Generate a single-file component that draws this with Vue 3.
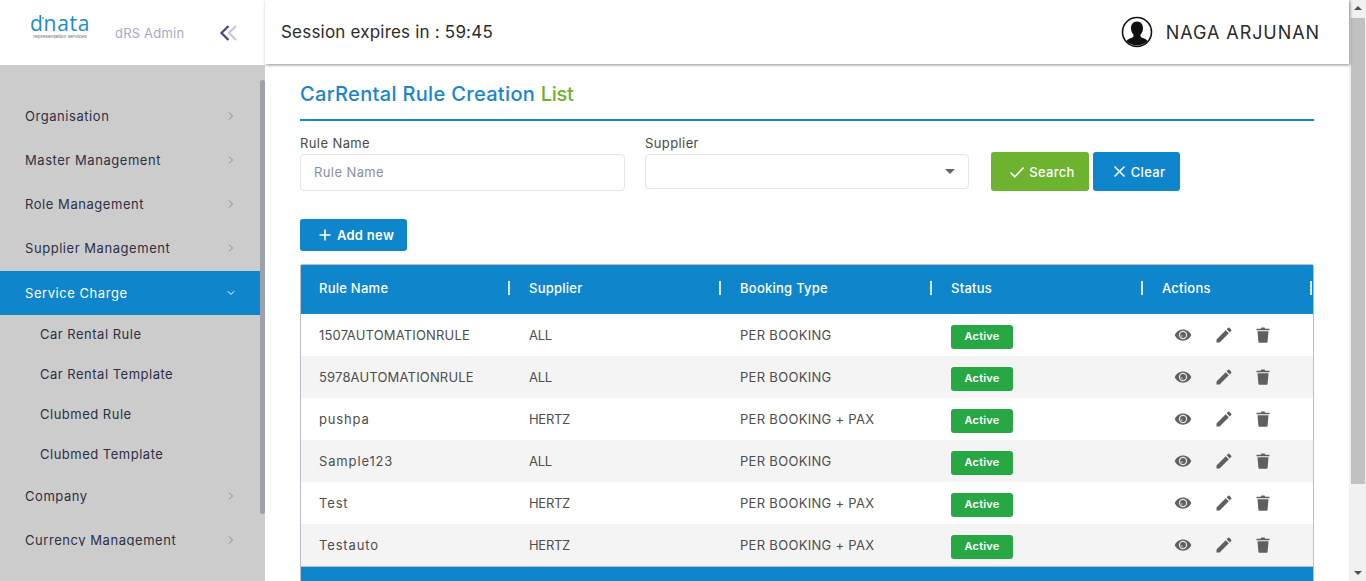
<script setup>
const menuTop = ['Organisation', 'Master Management', 'Role Management', 'Supplier Management']
const subItems = ['Car Rental Rule', 'Car Rental Template', 'Clubmed Rule', 'Clubmed Template']
const menuBottom = ['Company', 'Currency Management']
const rows = [
  ['1507AUTOMATIONRULE', 'ALL', 'PER BOOKING'],
  ['5978AUTOMATIONRULE', 'ALL', 'PER BOOKING'],
  ['pushpa', 'HERTZ', 'PER BOOKING + PAX'],
  ['Sample123', 'ALL', 'PER BOOKING'],
  ['Test', 'HERTZ', 'PER BOOKING + PAX'],
  ['Testauto', 'HERTZ', 'PER BOOKING + PAX'],
]
const heads = ['Rule Name', 'Supplier', 'Booking Type', 'Status', 'Actions']
const isMixed = (s) => /[a-z]/.test(s)
</script>

<template>
  <div class="page">
    <aside class="side">
      <div class="brand">
        <div class="logo">
          <div class="logo-word">dnata<i class="logo-dot"></i></div>
          <div class="logo-sub">representation services</div>
        </div>
        <span class="brand-name">dRS Admin</span>
        <svg class="collapse" width="20" height="18" viewBox="0 0 20 18" fill="none" stroke-width="2.2">
          <path d="M9.5 2 2.5 9l7 7" stroke="#45497a" />
          <path d="M17 2 10 9l7 7" stroke="#c6c7d6" />
        </svg>
      </div>
      <div class="menu">
        <nav class="menu-list">
          <a v-for="m in menuTop" :key="m" class="item">
            <span>{{ m }}</span>
            <svg class="chev" width="8" height="10" viewBox="0 0 8 10" fill="none"><path d="M2 1.5 5.5 5 2 8.5" stroke="#85889a" /></svg>
          </a>
          <a class="item active">
            <span>Service Charge</span>
            <svg class="chev" width="8" height="10" viewBox="0 0 8 10" fill="none"><path d="M.8 3.200 4 6.400l3.200-3.200" stroke="#fff" /></svg>
          </a>
          <a v-for="s in subItems" :key="s" class="sub">{{ s }}</a>
          <a v-for="m in menuBottom" :key="m" class="item">
            <span>{{ m }}</span>
            <svg class="chev" width="8" height="10" viewBox="0 0 8 10" fill="none"><path d="M2 1.5 5.5 5 2 8.5" stroke="#85889a" /></svg>
          </a>
        </nav>
        <div class="side-track"><div class="side-thumb"></div></div>
      </div>
    </aside>

    <div class="main">
      <header class="top">
        <div class="session">Session expires in : 59:45</div>
        <div class="user">
          <svg width="32" height="32" viewBox="0 0 32 32">
            <circle cx="16" cy="16" r="14.5" fill="#fff" stroke="#111" stroke-width="1.6" />
            <path d="M16 5.5c-3.900 0-6 2.900-6 6.600 0 2.600.9 5 2.500 6.600.3 1.600-.3 2.500-1.700 3.100-2 .8-4.100 1.500-5.400 3.100a14.700 14.700 0 0 0 21.200 0c-1.300-1.600-3.400-2.300-5.400-3.100-1.400-.6-2-1.500-1.700-3.100 1.600-1.600 2.500-4 2.500-6.600 0-3.700-2.100-6.600-6-6.600z" fill="#111" />
          </svg>
          <span>NAGA ARJUNAN</span>
        </div>
      </header>

      <main class="content">
        <h1 class="title">CarRental Rule Creation <span>List</span></h1>
        <form class="filters" @submit.prevent>
          <label class="field">
            <span class="lbl">Rule Name</span>
            <input class="inp" placeholder="Rule Name" />
          </label>
          <label class="field field-sel">
            <span class="lbl">Supplier</span>
            <span class="sel"><i class="caret"></i></span>
          </label>
          <div class="btns">
            <button class="btn green">
              <svg width="16" height="14" viewBox="0 0 16 14" fill="none"><path d="M1.500 7.500 5.800 11.800 14.500 2.500" stroke="#fff" stroke-width="1.700" /></svg>
              Search
            </button>
            <button class="btn blue">
              <svg width="13" height="13" viewBox="0 0 13 13" fill="none"><path d="M1.500 1.500l10 10M11.500 1.500l-10 10" stroke="#fff" stroke-width="1.500" /></svg>
              Clear
            </button>
          </div>
        </form>
        <button class="add">
          <svg width="12" height="12" viewBox="0 0 12 12" fill="none"><path d="M6 .5v11M.5 6h11" stroke="#fff" stroke-width="1.600" /></svg>
          Add new
        </button>

        <div class="table">
          <div class="row head">
            <div v-for="h in heads" :key="h" class="cell">{{ h }}</div>
          </div>
          <div v-for="r in rows" :key="r[0]" class="row body">
            <div class="cell" :class="isMixed(r[0]) ? 'mixed' : 'caps'">{{ r[0] }}</div>
            <div class="cell sup">{{ r[1] }}</div>
            <div class="cell bt">{{ r[2] }}</div>
            <div class="cell"><span class="badge">Active</span></div>
            <div class="cell icons">
              <svg width="18" height="18" viewBox="0 0 24 24">
                <path d="M12 4.500C7 4.500 2.700 7.600 1 12c1.700 4.400 6 7.500 11 7.500s9.300-3.100 11-7.500c-1.700-4.400-6-7.500-11-7.500z" fill="#5f5f5f" />
                <circle cx="12" cy="12" r="5.600" fill="#e8e8e8" />
                <circle cx="12" cy="12" r="3.900" fill="#5f5f5f" />
                <circle cx="10.300" cy="13.400" r="1.500" fill="#a8a8a8" />
              </svg>
              <svg width="20" height="20" viewBox="0 0 24 24" fill="#5f5f5f"><path d="M3 17.250V21h3.750L17.810 9.940l-3.750-3.750L3 17.250zM20.710 7.040a1 1 0 0 0 0-1.410l-2.340-2.340a1 1 0 0 0-1.410 0l-1.830 1.830 3.750 3.750 1.830-1.830z" /></svg>
              <svg width="14" height="16" viewBox="0 0 14 16" fill="#5f5f5f"><path d="M.5 1.800h4.200L5.400.6h3.200l.7 1.200h4.200v1.500H.5zM1.500 4.300h11l-.9 10.500a1 1 0 0 1-1 .9H3.400a1 1 0 0 1-1-.9z" /></svg>
            </div>
          </div>
          <div class="foot"></div>
        </div>
      </main>
    </div>

    <div class="scroll">
      <i class="arrow up"></i>
      <div class="scroll-track"><div class="scroll-thumb"></div></div>
      <i class="arrow down"></i>
    </div>
  </div>
</template>

<style>
html, body { margin: 0; overflow: hidden; }
</style>

<style scoped>
.page {
  display: flex;
  height: 581px;
  overflow: hidden;
  background: #fff;
  font-family: Inter, "Noto Sans", "Liberation Sans", sans-serif;
  color: #444;
}
.side { width: 265px; flex: none; display: flex; flex-direction: column; }
.brand { height: 65px; flex: none; background: #fff; display: flex; align-items: center; }
.logo { width: 60px; margin-left: 30px; margin-top: -11px; text-align: center; line-height: 1; }
.logo-word { position: relative; color: #1a8cc9; font-family: "Open Sans", sans-serif; font-size: 21px; line-height: 16px; letter-spacing: .7px; }
.logo-dot { position: absolute; left: 12px; top: 2px; width: 2px; height: 2px; border-radius: 50%; background: #7dbb2e; }
.logo-sub { color: #6f7580; font-family: "Liberation Sans", sans-serif; font-size: 5.200px; line-height: 7px; white-space: nowrap; margin-top: 2px; }
.brand-name { margin-left: 25px; font-size: 13px; color: #a6a9c4; letter-spacing: .2px; }
.collapse { margin-left: 35px; }
.menu { flex: 1; background: #ccc; display: flex; min-height: 0; align-items: flex-start; }
.menu-list { flex: 1; height: 452px; padding-top: 29px; display: flex; flex-direction: column; overflow: hidden; }
.item { height: 44px; flex: none; display: flex; align-items: center; justify-content: space-between; padding: 0 25px; font-size: 13px; color: #2f2f45; letter-spacing: .55px; }
.item.active { background: #0f85cb; color: #fff; margin-top: 1px; margin-bottom: -1px; }
.sub { height: 40px; flex: none; display: flex; align-items: center; padding-left: 40px; font-size: 13px; color: #2f2f45; letter-spacing: .5px; }
.side-track { width: 5px; flex: none; padding-top: 15px; }
.side-thumb { height: 434px; background: #9da1ae; border-radius: 3px; }

.main { flex: 1; min-width: 0; display: flex; flex-direction: column; }
.top {
  height: 64px; flex: none; display: flex; align-items: center; justify-content: space-between;
  padding: 0 29px 0 16px; background: #fff; box-shadow: 1px 1px 3px rgba(0, 0, 0, .45); position: relative; z-index: 1;
}
.session { font-size: 17px; color: #2b2b2b; letter-spacing: .2px; }
.user { display: flex; align-items: center; gap: 13px; font-size: 18px; color: #2b2b2b; letter-spacing: .92px; }
.content { flex: 1; min-height: 0; padding: 0 35px; }
.title { margin: 0; height: 57px; box-sizing: border-box; padding-top: 16px; font-size: 20px; line-height: 28px; font-weight: 500; color: #1a85c9; border-bottom: 2px solid #0f85cb; letter-spacing: .33px; }
.title span { color: #6db32f; letter-spacing: -.3px; }
.filters { display: flex; margin-top: 13px; height: 57px; }
.field { display: flex; flex-direction: column; width: 325px; }
.field-sel { width: 324px; margin-left: 20px; }
.lbl { font-size: 13px; line-height: 18px; margin-bottom: 2px; color: #4a4a4a; letter-spacing: .4px; }
.inp { height: 37px; box-sizing: border-box; border: 1px solid #e2e5ec; border-radius: 4px; padding: 0 13px 2px; font: inherit; font-size: 13px; letter-spacing: .4px; outline: none; width: 100%; }
.inp::placeholder { color: #8a8ea3; }
.sel { height: 35px; box-sizing: border-box; border: 1px solid #e2e5ec; border-radius: 4px; display: flex; align-items: center; justify-content: flex-end; padding-right: 13px; }
.caret { width: 0; height: 0; border: 5px solid transparent; border-top: 5px solid #666; border-bottom: 0; }
.btns { display: flex; gap: 4px; margin-left: 22px; padding-top: 18px; }
.btn, .add {
  border: 0; color: #fff; font: inherit; font-size: 13px; font-weight: 500; letter-spacing: .3px; display: flex; align-items: center; justify-content: center; gap: 4px; border-radius: 3px; padding: 0;
}
.btn { height: 39px; }
.green { width: 98px; background: #6db32f; padding-left: 4px; }
.blue { width: 87px; background: #0f85cb; gap: 5px; padding-left: 5px; }
.add { margin-top: 28px; width: 107px; height: 32px; background: #0f85cb; gap: 6px; font-weight: 600; padding-left: 6px; }
.table { margin-top: 13px; border: 1px solid #b9bdcb; border-bottom: 0; border-radius: 3px 3px 0 0; }
.row { display: grid; grid-template-columns: 210px 211px 211px 211px 1fr; }
.head { height: 49px; box-sizing: border-box; padding-bottom: 3px; background: #0f85cb; color: #fff; font-size: 13px; font-weight: 500; align-items: center; letter-spacing: .25px; }
.head .cell { height: 14px; line-height: 14px; padding-left: 18px; margin-right: 1px; border-right: 2px solid #d8e6f0; box-sizing: border-box; }
.body { height: 42px; align-items: center; font-size: 13px; color: #4e4e4e; }
.body:nth-child(odd) { background: #f4f4f4; }
.body .cell { padding-left: 18px; }
.body .caps { letter-spacing: .17px; }
.body .mixed { letter-spacing: .85px; }
.body .sup { letter-spacing: -.3px; }
.body .bt { letter-spacing: .3px; }
.badge { display: block; width: 62px; height: 24px; line-height: 23px; margin-top: 4px; text-align: center; background: #28a745; color: #fff; border-radius: 3px; font-size: 11px; font-weight: 600; letter-spacing: .2px; }
.body .icons { display: flex; align-items: center; gap: 22px; padding-left: 30px; }
.foot { height: 40px; background: #0f85cb; border-top: 1px solid #b9bdcb; }

.scroll { width: 17px; flex: none; background: #f1f1f1; display: flex; flex-direction: column; align-items: center; }
.arrow { width: 0; height: 0; border: 4px solid transparent; flex: none; }
.up { border-bottom: 4px solid #505050; border-top: 0; margin: 6px 0 8px; }
.down { border-top: 4px solid #505050; border-bottom: 0; margin: 7px 0 6px; }
.scroll-track { flex: 1; width: 14px; }
.scroll-thumb { height: 466px; background: #c1c1c1; }
</style>
